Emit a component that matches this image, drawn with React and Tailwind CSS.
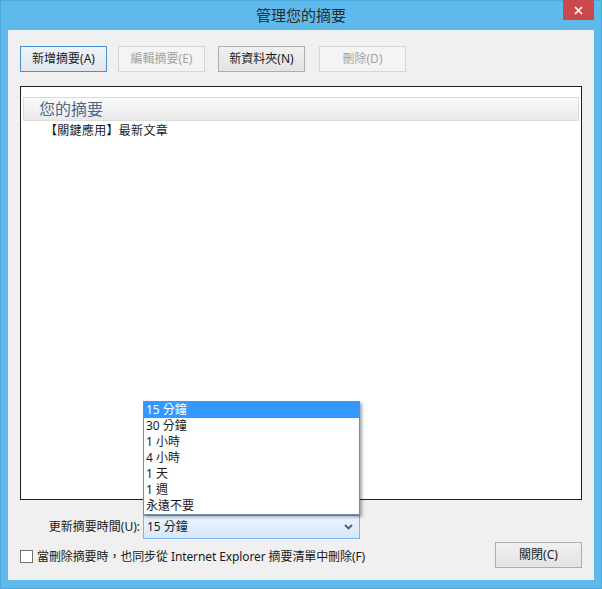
import React from "react";

const font = { fontFamily: '"Noto Sans", "Noto Sans CJK TC", sans-serif' };

const intervals = ["15 分鐘", "30 分鐘", "1 小時", "4 小時", "1 天", "1 週", "永遠不要"];

function Button({ children, variant = "normal", className = "" }) {
  const styles = {
    normal: "border-[#adadad] bg-gradient-to-b from-[#f0f0f0] to-[#e3e3e3] text-[#1a1a1a]",
    primary: "border-[#4a8fd0] bg-gradient-to-b from-[#eef3f8] to-[#e2e8ee] text-[#1a1a1a]",
    disabled: "border-[#d6d6d6] bg-[#f4f4f4] text-[#a3a3a3]",
  };
  return (
    <div
      className={`h-[26px] w-[87px] border flex items-center justify-center text-[12px] leading-none ${styles[variant]} ${className}`}
    >
      {children}
    </div>
  );
}

export default function App() {
  return (
    <div
      className="w-[602px] h-[589px] bg-[#5fbaec] flex flex-col border border-[#4ea8de]"
      style={font}
    >
      {/* title bar */}
      <div className="relative h-[29px] flex items-center justify-center">
        <span className="text-[15px] text-[#2b2b2b] leading-none">管理您的摘要</span>
        <div className="absolute right-[7px] top-[-1px] w-[31px] h-[20px] bg-[#c9494d] flex items-center justify-center">
          <svg width="9" height="9" viewBox="0 0 9 9">
            <path d="M1 1 L8 8 M8 1 L1 8" stroke="#ffffff" strokeWidth="1.7" />
          </svg>
        </div>
      </div>

      {/* client area */}
      <div className="relative flex-1 mx-[7px] mb-[8px] bg-[#f0f0f0] flex flex-col">
        <div className="flex items-center pl-[12px] pt-[16px]">
          <Button variant="primary">新增摘要(A)</Button>
          <Button variant="disabled" className="ml-[11px]">編輯摘要(E)</Button>
          <Button className="ml-[13px]">新資料夾(N)</Button>
          <Button variant="disabled" className="ml-[14px]">刪除(D)</Button>
        </div>

        {/* feed list */}
        <div className="mt-[14px] mx-[12px] h-[414px] bg-white border border-[#1f1f1f] px-[2px] pt-[10px]">
          <div className="h-[24px] border border-[#dcdcdc] bg-gradient-to-b from-[#fbfbfb] to-[#e9e9e9] flex items-center pl-[15px]">
            <span className="text-[16px] text-[#4b6891] leading-none">您的摘要</span>
          </div>
          <div className="mt-[4px] pl-[22px] text-[12px] text-[#1a1a1a] leading-none tracking-[0.3px]">
            【關鍵應用】最新文章
          </div>
        </div>

        {/* refresh interval */}
        <div className="mt-[15px] flex items-center">
          <div className="w-[132px] text-right text-[12px] text-[#1a1a1a]">更新摘要時間(U):</div>
          <div className="ml-[3px] w-[217px] h-[24px] border border-[#7eb4ea] bg-gradient-to-b from-[#ecf4fc] to-[#d4e8fc] flex items-center justify-between pl-[3px] pr-[6px]">
            <span className="text-[12px] text-[#1a1a1a]">15 分鐘</span>
            <svg width="9" height="6" viewBox="0 0 9 6">
              <path d="M1 1 L4.5 4.5 L8 1" fill="none" stroke="#4d5c70" strokeWidth="1.8" />
            </svg>
          </div>
        </div>

        <div className="mt-[2px] flex items-start justify-between pl-[12px] pr-[12px]">
          <div className="mt-[9px] flex items-center">
            <div className="w-[13px] h-[13px] border border-[#707070] bg-white" />
            <span className="ml-[4px] text-[12px] text-[#1a1a1a] leading-none tracking-[-0.1px]">
              當刪除摘要時，也同步從 Internet Explorer 摘要清單中刪除(F)
            </span>
          </div>
          <Button className="h-[25px] mt-[1px]">關閉(C)</Button>
        </div>

        {/* opened dropdown */}
        <div className="absolute left-[135px] top-[371px] w-[217px] bg-white border border-[#6e8db5] shadow-[2px_2px_3px_rgba(0,0,0,0.35)]">
          {intervals.map((item, i) => (
            <div
              key={item}
              className={`h-[16px] pl-[2px] flex items-center text-[12px] leading-none ${
                i === 0 ? "bg-[#3399ff] text-white" : "text-[#1a1a1a]"
              }`}
            >
              {item}
            </div>
          ))}
        </div>
      </div>
    </div>
  );
}
